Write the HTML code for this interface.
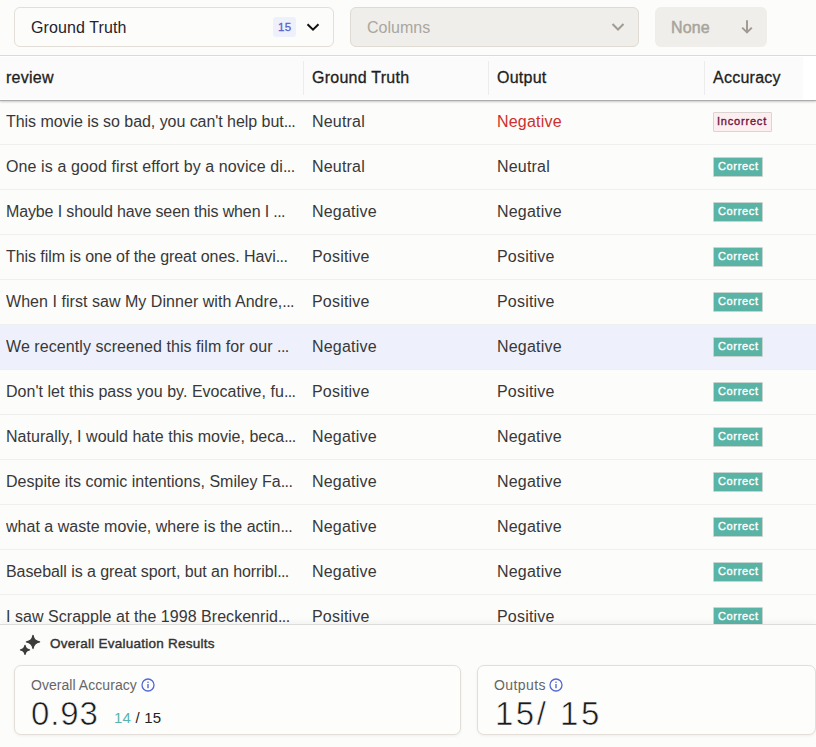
<!DOCTYPE html>
<html><head><meta charset="utf-8">
<style>
*{box-sizing:border-box;margin:0;padding:0}
html,body{width:816px;height:747px;overflow:hidden;background:#fcfcfb;font-family:"Liberation Sans",sans-serif;color:#222}
.abs{position:absolute}
#dd1{left:14px;top:7px;width:320px;height:40px;border:1px solid #e3dfd8;border-radius:6px;background:#fcfcfb}
#dd1 .t{left:16px;top:10px;font-size:16px;color:#23232f;line-height:20px;letter-spacing:.1px}
#dd1 .badge{left:258px;top:9px;width:23px;height:20px;background:#eef0fc;border-radius:3px;color:#5862c9;font-size:11.5px;line-height:20px;text-align:center;-webkit-text-stroke:.3px #5862c9;letter-spacing:.4px;text-indent:.4px}
#dd2{left:350px;top:7px;width:289px;height:40px;border:1px solid #dfdbd3;border-radius:6px;background:#efeeeb}
#dd2 .t{left:16px;top:10px;font-size:16px;color:#aaa69e;line-height:20px}
#btn{left:655px;top:7px;width:112px;height:40px;border-radius:6px;background:#efeeeb}
#btn .t{left:16px;top:11px;font-size:16px;color:#a8a49c;line-height:20px;-webkit-text-stroke:.5px #a8a49c;letter-spacing:.1px}
#tbl{left:0;top:55px;width:816px;height:570px;border-top:1px solid #dadada;background:#fcfcfb;overflow:hidden}
#hdr{z-index:2;left:0;top:0;width:816px;height:45px;background:#fff;border-bottom:1px solid #ababab;box-shadow:0 1px 2px rgba(0,0,0,.2)}
#hdr .bg{left:0;top:1px;width:803px;height:42px;background:#fbfbfb}
.hc{position:absolute;top:0;height:44px;font-size:16px;line-height:44px;color:#1e1e1e;-webkit-text-stroke:.3px #1e1e1e;letter-spacing:.25px}
.vd{position:absolute;top:5px;width:1px;height:34px;background:#ececec}
.row{position:absolute;left:0;width:816px;height:45px;border-bottom:1px solid #efefef}
.row.hl{background:#eef1fc}
.c{position:absolute;top:0;height:44px;line-height:44px;font-size:16px;color:#383838;white-space:nowrap;letter-spacing:.2px}
.c1{left:6px;width:297px;overflow:hidden}
.el{letter-spacing:-.6px}
.c2{left:312px}
.c3{left:497px}
.neg{color:#cf2f2f}
.bd{position:absolute;left:713px;top:12px;height:20px;font-size:11px;line-height:16px;padding:0 0 0 4px;border:1px solid;border-radius:1px;letter-spacing:.65px;white-space:nowrap}
.bd.ok{background:#5ab4a6;border-color:#c9d3cf;color:#fff;width:50px;height:20px;top:12px;line-height:17px;-webkit-text-stroke:.35px #fff}
.bd.bad{background:#fdeff0;border-color:#dcd3d3;color:#6e1442;width:59px;padding-left:3px;letter-spacing:.8px;-webkit-text-stroke:.35px #6e1442}
#panel{z-index:3;left:0;top:624px;width:816px;height:123px;border-top:1px solid #dcdcdc;background:#fcfcfb;box-shadow:0 -3px 6px rgba(0,0,0,.035)}
#ptitle{left:50px;top:11px;font-size:13.5px;color:#333;line-height:16px;-webkit-text-stroke:.4px #333;letter-spacing:.25px}
.card{position:absolute;top:40px;height:70px;border:1px solid #e3dfd8;border-radius:7px;background:#fdfdfc;box-shadow:0 1px 3px rgba(0,0,0,.06)}
.card .lbl{position:absolute;left:16px;top:10px;font-size:14px;color:#666;line-height:18px;white-space:nowrap;letter-spacing:.05px}
.card .big{position:absolute;left:16px;top:29.5px;font-size:33px;color:#1a1a1a;line-height:36px;white-space:nowrap;-webkit-text-stroke:.6px #fdfdfc}
.sub{font-size:15px;line-height:18px;color:#222;white-space:nowrap}
</style></head><body>
<div id="dd1" class="abs">
  <div class="abs t">Ground Truth</div>
  <div class="abs badge">15</div>
  <svg class="abs" style="left:291px;top:14px" width="14" height="10" viewBox="0 0 14 10"><path d="M1.5 2.2 L7 7.6 L12.5 2.2" fill="none" stroke="#111" stroke-width="2"/></svg>
</div>
<div id="dd2" class="abs">
  <div class="abs t">Columns</div>
  <svg class="abs" style="left:260px;top:14px" width="14" height="10" viewBox="0 0 14 10"><path d="M1.5 2 L7 7.5 L12.5 2" fill="none" stroke="#a09c92" stroke-width="2"/></svg>
</div>
<div id="btn" class="abs">
  <div class="abs t">None</div>
  <svg class="abs" style="left:85px;top:13px" width="14" height="14" viewBox="0 0 14 14"><path d="M7 0.3 V12.3 M2.2 7.6 L7 12.4 L11.8 7.6" fill="none" stroke="#a09c92" stroke-width="2"/></svg>
</div>

<div id="tbl" class="abs">
  <div id="hdr" class="abs">
    <div class="abs bg"></div>
    <div class="hc" style="left:6px">review</div>
    <div class="vd" style="left:303px"></div>
    <div class="hc" style="left:312px">Ground Truth</div>
    <div class="vd" style="left:488px"></div>
    <div class="hc" style="left:497px">Output</div>
    <div class="vd" style="left:704px"></div>
    <div class="hc" style="left:713px">Accuracy</div>
  </div>
  <div id="rows">
<!--ROWS-->
<div class="row" style="top:44px"><div class="c c1" style="letter-spacing:-0.050px">This&#32;movie&#32;is&#32;so&#32;bad,&#32;you&#32;can't&#32;help&#32;but<span class="el">...</span></div><div class="c c2">Neutral</div><div class="c c3 neg">Negative</div><div class="bd bad">Incorrect</div></div>
<div class="row" style="top:89px"><div class="c c1" style="letter-spacing:0.102px">One&#32;is&#32;a&#32;good&#32;first&#32;effort&#32;by&#32;a&#32;novice&#32;di<span class="el">...</span></div><div class="c c2">Neutral</div><div class="c c3">Neutral</div><div class="bd ok">Correct</div></div>
<div class="row" style="top:134px"><div class="c c1" style="letter-spacing:-0.130px">Maybe&#32;I&#32;should&#32;have&#32;seen&#32;this&#32;when&#32;I&#32;<span class="el">...</span></div><div class="c c2">Negative</div><div class="c c3">Negative</div><div class="bd ok">Correct</div></div>
<div class="row" style="top:179px"><div class="c c1" style="letter-spacing:-0.060px">This&#32;film&#32;is&#32;one&#32;of&#32;the&#32;great&#32;ones.&#32;Havi<span class="el">...</span></div><div class="c c2">Positive</div><div class="c c3">Positive</div><div class="bd ok">Correct</div></div>
<div class="row" style="top:224px"><div class="c c1" style="letter-spacing:0.042px">When&#32;I&#32;first&#32;saw&#32;My&#32;Dinner&#32;with&#32;Andre,<span class="el">...</span></div><div class="c c2">Positive</div><div class="c c3">Positive</div><div class="bd ok">Correct</div></div>
<div class="row hl" style="top:269px"><div class="c c1" style="letter-spacing:0.072px">We&#32;recently&#32;screened&#32;this&#32;film&#32;for&#32;our&#32;<span class="el">...</span></div><div class="c c2">Negative</div><div class="c c3">Negative</div><div class="bd ok">Correct</div></div>
<div class="row" style="top:314px"><div class="c c1" style="letter-spacing:0.029px">Don't&#32;let&#32;this&#32;pass&#32;you&#32;by.&#32;Evocative,&#32;fu<span class="el">...</span></div><div class="c c2">Positive</div><div class="c c3">Positive</div><div class="bd ok">Correct</div></div>
<div class="row" style="top:359px"><div class="c c1" style="letter-spacing:0.025px">Naturally,&#32;I&#32;would&#32;hate&#32;this&#32;movie,&#32;beca<span class="el">...</span></div><div class="c c2">Negative</div><div class="c c3">Negative</div><div class="bd ok">Correct</div></div>
<div class="row" style="top:404px"><div class="c c1" style="letter-spacing:0.021px">Despite&#32;its&#32;comic&#32;intentions,&#32;Smiley&#32;Fa<span class="el">...</span></div><div class="c c2">Negative</div><div class="c c3">Negative</div><div class="bd ok">Correct</div></div>
<div class="row" style="top:449px"><div class="c c1" style="letter-spacing:0.016px">what&#32;a&#32;waste&#32;movie,&#32;where&#32;is&#32;the&#32;actin<span class="el">...</span></div><div class="c c2">Negative</div><div class="c c3">Negative</div><div class="bd ok">Correct</div></div>
<div class="row" style="top:494px"><div class="c c1" style="letter-spacing:-0.068px">Baseball&#32;is&#32;a&#32;great&#32;sport,&#32;but&#32;an&#32;horribl<span class="el">...</span></div><div class="c c2">Negative</div><div class="c c3">Negative</div><div class="bd ok">Correct</div></div>
<div class="row" style="top:539px"><div class="c c1" style="letter-spacing:0.043px">I&#32;saw&#32;Scrapple&#32;at&#32;the&#32;1998&#32;Breckenrid<span class="el">...</span></div><div class="c c2">Positive</div><div class="c c3">Positive</div><div class="bd ok">Correct</div></div>
<!--/ROWS-->
  </div>
</div>

<div id="panel" class="abs">
  <svg class="abs" style="left:14px;top:5px" width="32" height="30" viewBox="14 630 32 30">
    <path d="M33 635.3 Q33.9 641.0 39.6 641.9 Q33.9 642.8 33 648.5 Q32.1 642.8 26.4 641.9 Q32.1 641.0 33 635.3 Z" fill="#3c3c3c" stroke="#3c3c3c" stroke-width="1.3" stroke-linejoin="round"/>
    <path d="M25 645.4 Q25.7 649.1999999999999 29.5 649.9 Q25.7 650.6 25 654.4 Q24.3 650.6 20.5 649.9 Q24.3 649.1999999999999 25 645.4 Z" fill="#3c3c3c" stroke="#3c3c3c" stroke-width="1.3" stroke-linejoin="round"/>
  </svg>
  <div id="ptitle" class="abs">Overall Evaluation Results</div>
  <div class="card" style="left:14px;width:447px">
    <div class="lbl">Overall Accuracy</div>
    <svg class="abs info" style="left:126px;top:12px" width="14" height="14" viewBox="0 0 14 14"><circle cx="7" cy="7" r="6" fill="none" stroke="#5468d4" stroke-width="1.3"/><rect x="6.3" y="6" width="1.4" height="4.2" fill="#5468d4"/><circle cx="7" cy="4.2" r=".8" fill="#5468d4"/></svg>
    <div class="big" style="letter-spacing:.9px">0.93</div>
    <div class="abs sub" style="left:99px;top:43px;letter-spacing:.2px"><span style="color:#58b4ad">14</span> / 15</div>
  </div>
  <div class="card" style="left:477px;width:339px">
    <div class="lbl" style="letter-spacing:.4px">Outputs</div>
    <svg class="abs info" style="left:71px;top:12px" width="14" height="14" viewBox="0 0 14 14"><circle cx="7" cy="7" r="6" fill="none" stroke="#5468d4" stroke-width="1.3"/><rect x="6.3" y="6" width="1.4" height="4.2" fill="#5468d4"/><circle cx="7" cy="4.2" r=".8" fill="#5468d4"/></svg>
    <div class="big" style="letter-spacing:2.5px;left:17px">15/ 15</div>
  </div>
</div>
</body></html>
